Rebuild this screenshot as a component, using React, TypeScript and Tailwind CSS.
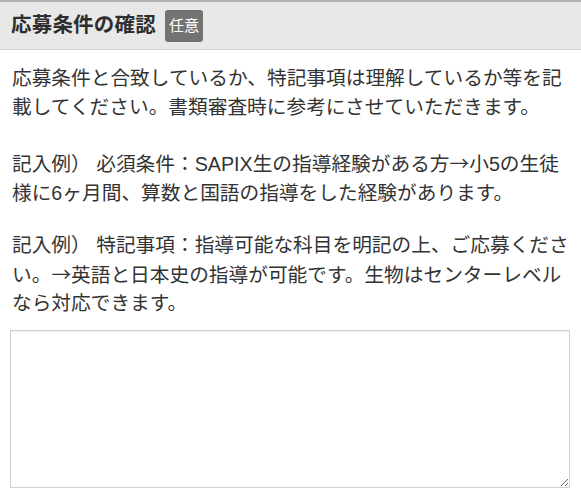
export default function App() {
  return (
    <div className="w-[581px] bg-white font-['Liberation_Sans','Noto_Sans_CJK_JP',sans-serif] text-[#333]">
      <div className="flex h-[50px] items-center gap-[9px] border-t-2 border-b border-t-[#b0b0b0] border-b-[#d2d2d2] bg-[#e8e8e8] px-[11px]">
        <h2 className="text-[20.5px] font-bold leading-none tracking-[0.2px] text-[#2e2e2e]">応募条件の確認</h2>
        <span className="flex h-[32px] w-[38px] items-center justify-center rounded-[3px] bg-[#737373] text-[15px] leading-none text-white">
          任意
        </span>
      </div>

      <div className="px-[12px] pt-[14px] text-[19.7px] leading-[28.5px]">
        <p>応募条件と合致しているか、特記事項は理解しているか等を記載してください。書類審査時に参考にさせていただきます。</p>
        <p className="mt-[28px]">
          記入例） 必須条件：SAPIX生の指導経験がある方<span className="font-['Noto_Sans_CJK_JP',sans-serif]">→</span>小5の生徒様に6ヶ月間、算数と国語の指導をした経験があります。
        </p>
        <p className="mt-[24px]">
          記入例） 特記事項：指導可能な科目を明記の上、ご応募ください。<span className="font-['Noto_Sans_CJK_JP',sans-serif]">→</span>英語と日本史の指導が可能です。生物はセンターレベルなら対応できます。
        </p>
      </div>

      <div className="px-[10px] pt-[12px] pb-[19px]">
        <textarea className="block h-[158px] w-[560px] resize-y border border-[#d0d0d0] bg-white shadow-[inset_0_1px_1px_rgba(0,0,0,0.06)] outline-none" />
      </div>
    </div>
  );
}
